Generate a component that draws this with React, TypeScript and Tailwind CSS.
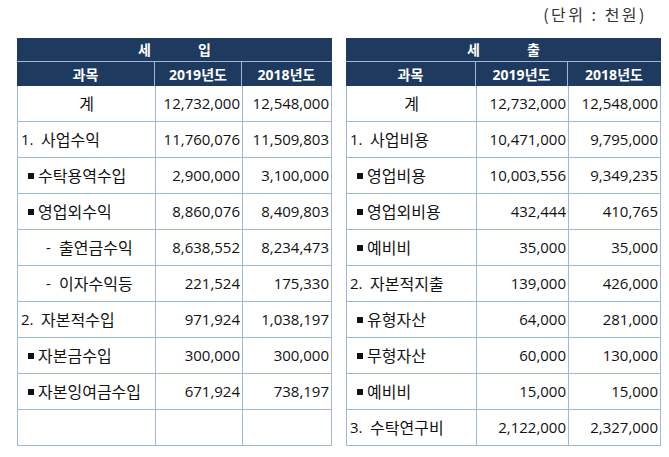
import React from "react";

type Row = { kind: "total" | "num" | "bullet" | "dash" | "empty"; label?: string; num?: string; a?: string; b?: string };

const left: Row[] = [
  { kind: "total", label: "계", a: "12,732,000", b: "12,548,000" },
  { kind: "num", num: "1.", label: "사업수익", a: "11,760,076", b: "11,509,803" },
  { kind: "bullet", label: "수탁용역수입", a: "2,900,000", b: "3,100,000" },
  { kind: "bullet", label: "영업외수익", a: "8,860,076", b: "8,409,803" },
  { kind: "dash", label: "출연금수익", a: "8,638,552", b: "8,234,473" },
  { kind: "dash", label: "이자수익등", a: "221,524", b: "175,330" },
  { kind: "num", num: "2.", label: "자본적수입", a: "971,924", b: "1,038,197" },
  { kind: "bullet", label: "자본금수입", a: "300,000", b: "300,000" },
  { kind: "bullet", label: "자본잉여금수입", a: "671,924", b: "738,197" },
  { kind: "empty" },
];

const right: Row[] = [
  { kind: "total", label: "계", a: "12,732,000", b: "12,548,000" },
  { kind: "num", num: "1.", label: "사업비용", a: "10,471,000", b: "9,795,000" },
  { kind: "bullet", label: "영업비용", a: "10,003,556", b: "9,349,235" },
  { kind: "bullet", label: "영업외비용", a: "432,444", b: "410,765" },
  { kind: "bullet", label: "예비비", a: "35,000", b: "35,000" },
  { kind: "num", num: "2.", label: "자본적지출", a: "139,000", b: "426,000" },
  { kind: "bullet", label: "유형자산", a: "64,000", b: "281,000" },
  { kind: "bullet", label: "무형자산", a: "60,000", b: "130,000" },
  { kind: "bullet", label: "예비비", a: "15,000", b: "15,000" },
  { kind: "num", num: "3.", label: "수탁연구비", a: "2,122,000", b: "2,327,000" },
];

function Label({ r }: { r: Row }) {
  if (r.kind === "total")
    return <div className="flex-1 text-center text-[16px]">{r.label}</div>;
  if (r.kind === "num")
    return (
      <div className="flex items-center pl-[3px]">
        <span className="inline-block w-[20px]">{r.num}</span>
        <span className="text-[16px]">{r.label}</span>
      </div>
    );
  if (r.kind === "bullet")
    return (
      <div className="flex items-center pl-[10px]">
        <span className="inline-block w-[6px] h-[6px] bg-[#111] mr-[4px]" />
        <span className="text-[16px]">{r.label}</span>
      </div>
    );
  if (r.kind === "dash")
    return (
      <div className="flex items-center pl-[28px]">
        <span className="inline-block w-[13px]">-</span>
        <span className="text-[16px]">{r.label}</span>
      </div>
    );
  return null;
}

function Table({ title, cols, rows }: { title: [string, string]; cols: string; rows: Row[] }) {
  return (
    <div className="w-[315px]">
      <div className="h-[24px] bg-[#1e3a5f] text-white font-bold text-[14px] flex items-center justify-center gap-[47px] border-b border-[#9db7dd]">
        <span>{title[0]}</span>
        <span>{title[1]}</span>
      </div>
      <div className={`grid ${cols} h-[24px] bg-[#1e3a5f] text-white font-bold text-[14px]`}>
        <div className="flex items-center justify-center border-r border-[#9db7dd]">과목</div>
        <div className="flex items-center justify-center border-r border-[#9db7dd]">2019년도</div>
        <div className="flex items-center justify-center">2018년도</div>
      </div>
      <div className="border-l border-[#9db7dd]">
        {rows.map((r, i) => (
          <div key={i} className={`grid ${cols} h-[36px] border-b border-[#9db7dd] text-[15px] text-[#111]`}>
            <div className="flex items-center border-r border-[#9db7dd]">
              <Label r={r} />
            </div>
            <div className="flex items-center justify-end pr-[2px] border-r border-[#9db7dd]">{r.a}</div>
            <div className="flex items-center justify-end pr-[2px] border-r border-[#9db7dd]">{r.b}</div>
          </div>
        ))}
      </div>
    </div>
  );
}

export default function App() {
  return (
    <div
      className="w-[669px] h-[457px] bg-white overflow-hidden"
      style={{ fontFamily: '"Open Sans", "Noto Sans CJK KR", sans-serif' }}
    >
      <div className="h-[38px] flex items-center justify-end pr-[22px] pb-[10px]">
        <span className="text-[16px] text-[#333] tracking-[2.5px]" style={{ fontFamily: '"Noto Sans CJK KR", serif' }}>
          (단위 : 천원)
        </span>
      </div>
      <div className="flex gap-[14px] pl-[17px]">
        <Table title={["세", "입"]} cols="grid-cols-[138px_87px_89px]" rows={left} />
        <Table title={["세", "출"]} cols="grid-cols-[130px_92px_92px]" rows={right} />
      </div>
    </div>
  );
}
